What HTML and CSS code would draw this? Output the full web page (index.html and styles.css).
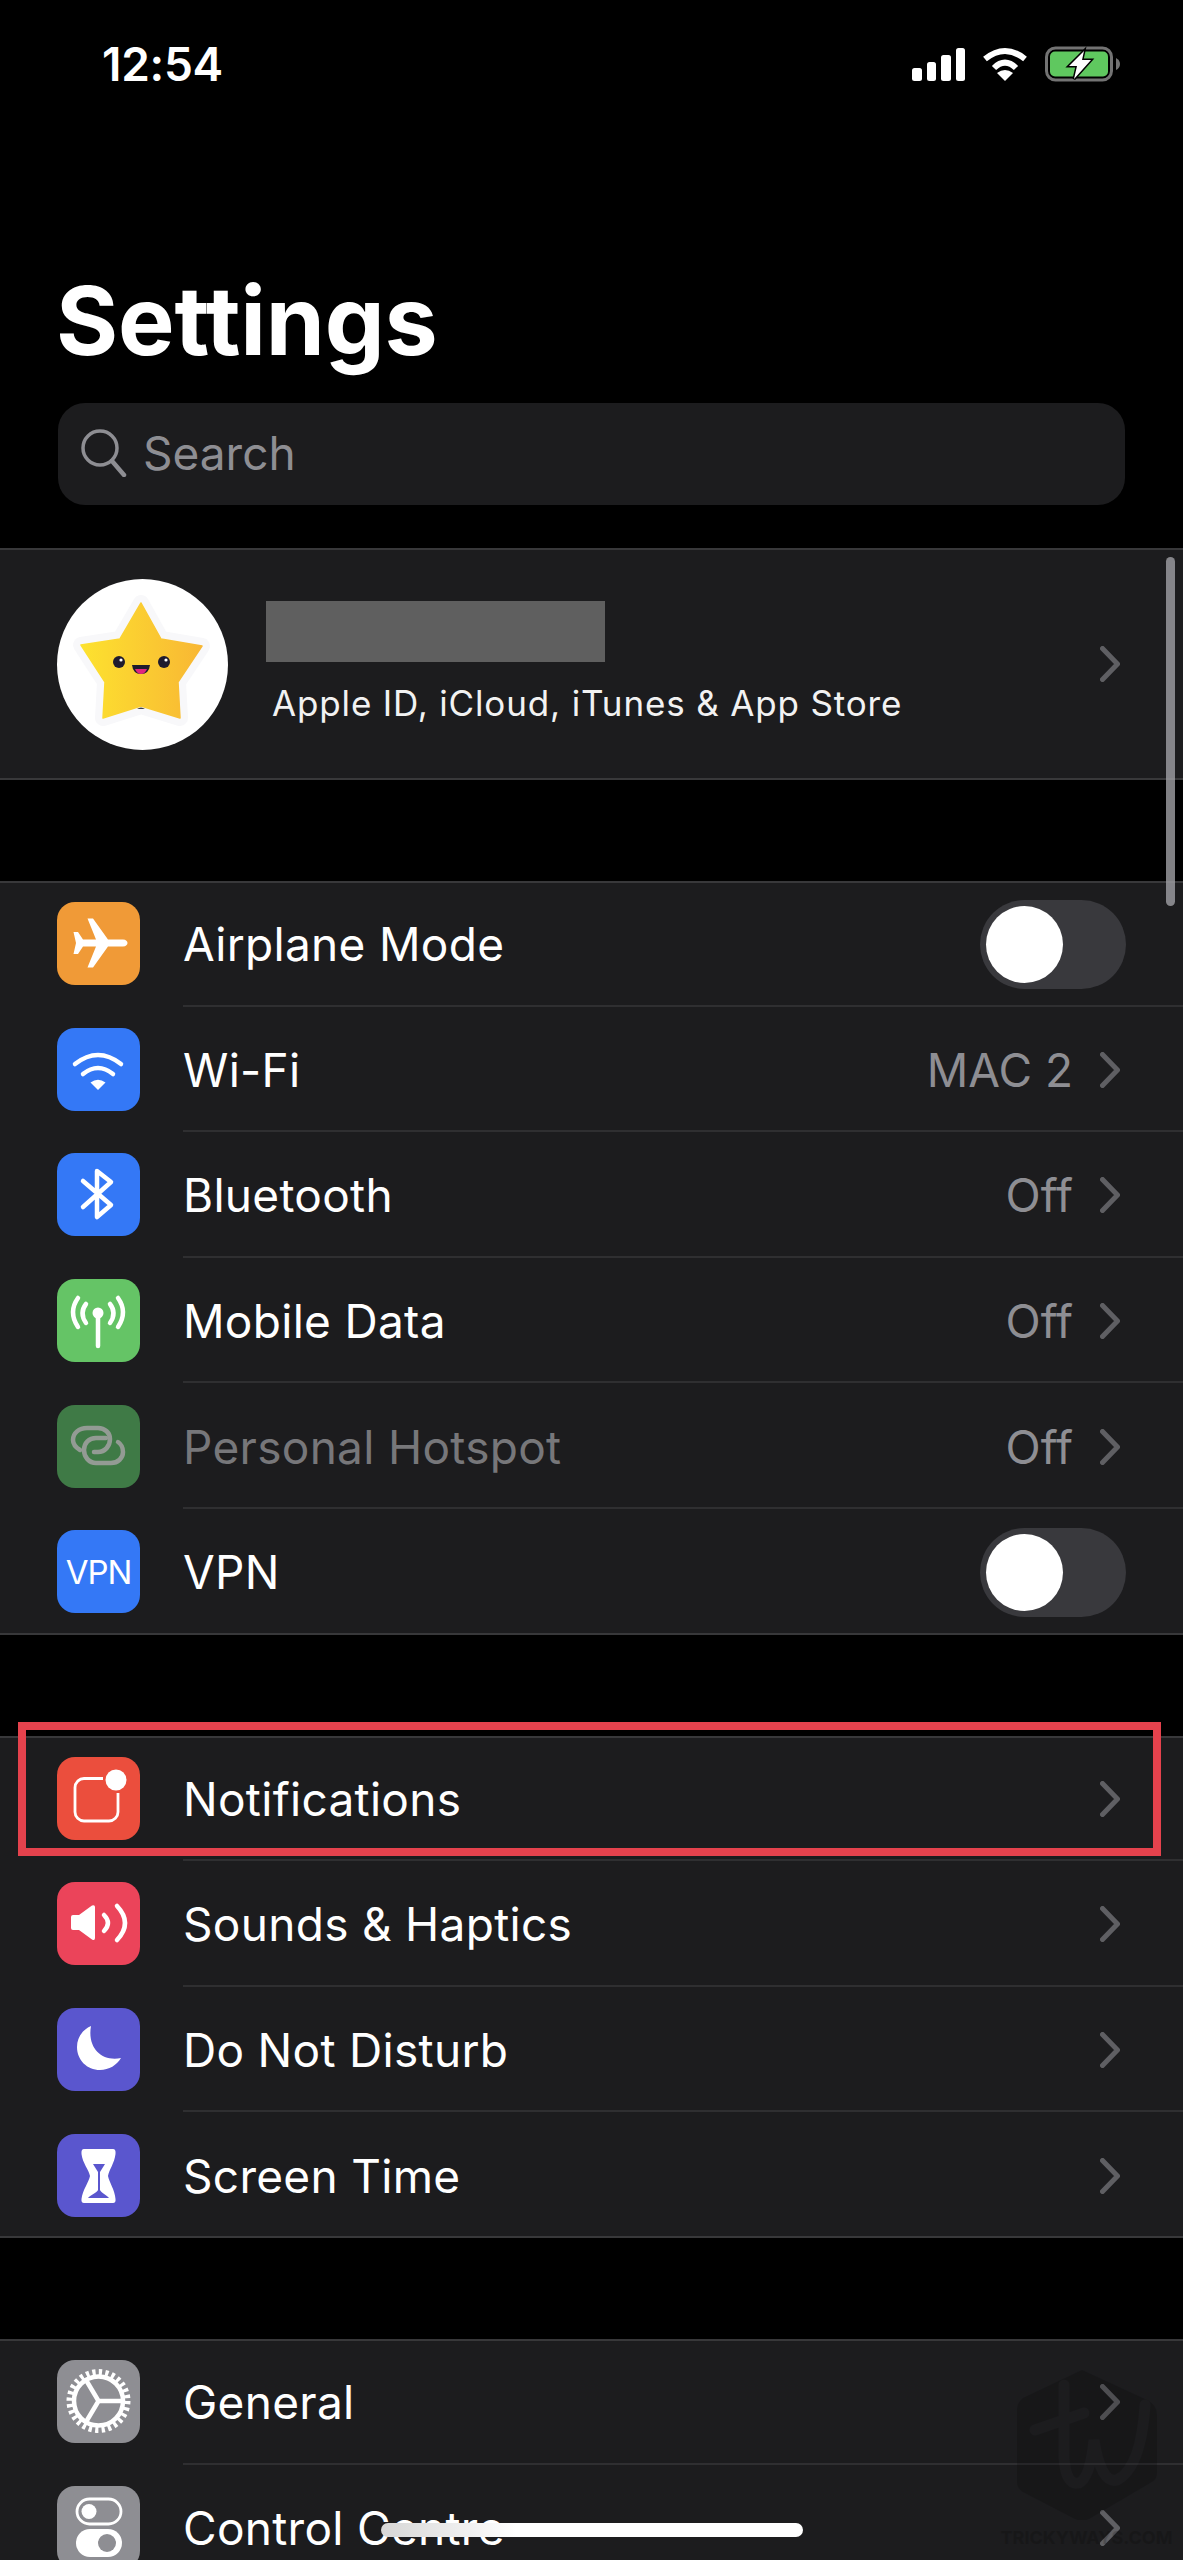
FILE: index.html
```html
<!DOCTYPE html>
<html lang="en">
<head>
    <meta charset="UTF-8">
    <meta name="viewport" content="width=device-width, initial-scale=1.0">
    <title>Settings</title>
    <link rel="stylesheet" href="styles.css">
</head>
<body>
    <div class="status-bar">
        <span class="status-time">12:54</span>
        <div class="status-icons">
            <div class="signal">
                <span class="bar bar-1"></span>
                <span class="bar bar-2"></span>
                <span class="bar bar-3"></span>
                <span class="bar bar-4"></span>
            </div>
            <svg class="status-wifi" width="46" height="34" viewBox="0 0 46 34">
                <path d="M3 12 Q23 -4 43 12" fill="none" stroke="#fff" stroke-width="6"/>
                <path d="M12 21 Q23 10 34 21" fill="none" stroke="#fff" stroke-width="6"/>
                <path d="M23 34 L15 26 Q23 20 31 26Z" fill="#fff"/>
            </svg>
            <svg class="status-battery" width="76" height="36" viewBox="0 0 76 36">
                <rect x="1.5" y="2" width="65" height="32" rx="9" fill="none" stroke="#737373" stroke-width="3"/>
                <rect x="5" y="5.5" width="58" height="25" rx="5" fill="#5fc85f"/>
                <path d="M71 12 Q75 14 75 18 Q75 22 71 24Z" fill="#737373"/>
                <path d="M39 5 L24 20 H32 L29 33 L46 14 H37Z" fill="#fff" stroke="#000" stroke-width="3" paint-order="stroke"/>
            </svg>
        </div>
    </div>

    <h1 class="page-title">Settings</h1>

    <div class="search-box">
        <svg width="46" height="48" viewBox="0 0 46 48">
            <circle cx="19" cy="19" r="17" fill="none" stroke="#8e8e93" stroke-width="3.5"/>
            <path d="M31 32 L43 46" stroke="#8e8e93" stroke-width="4.5" stroke-linecap="round"/>
        </svg>
        <span class="search-text">Search</span>
    </div>

    <div class="group profile">
        <div class="avatar">
            <svg width="171" height="171" viewBox="0 0 171 171">
                <defs>
                    <linearGradient id="starFill" x1="0" y1="0" x2="1" y2="0">
                        <stop offset="0" stop-color="#fde22f"/>
                        <stop offset="1" stop-color="#f8b734"/>
                    </linearGradient>
                </defs>
                <path class="star-edge" d="M84 24 L104 60 L145 67 L121 103 L123 139 L84 127 L46 139 L48 103 L24 66 L63 60Z"/>
                <path class="star-body" d="M84 24 L104 60 L145 67 L121 103 L123 139 L84 127 L46 139 L48 103 L24 66 L63 60Z"/>
                <circle cx="62" cy="83" r="6" fill="#1e1b2e"/>
                <circle cx="107" cy="83" r="6" fill="#1e1b2e"/>
                <circle cx="64" cy="81" r="1.6" fill="#fff"/>
                <circle cx="109" cy="81" r="1.6" fill="#fff"/>
                <path d="M75 86 H93 Q92 95 84 95 Q76 95 75 86Z" fill="#1e1b2e"/>
                <path d="M78 90 H90 Q88 95 84 95 Q80 95 78 90Z" fill="#e0267f"/>
                <path d="M80 130 Q84 127 88 130Z" fill="#444"/>
            </svg>
        </div>
        <div class="profile-text">
            <div class="profile-name"></div>
            <div class="profile-sub">Apple ID, iCloud, iTunes &amp; App Store</div>
        </div>
        <svg class="chevron" width="20" height="36" viewBox="0 0 20 36"><path d="M2.5 2.5 L17.5 18 L2.5 33.5"/></svg>
    </div>

    <div class="group">
        <div class="row">
            <div class="icon icon-orange">
                <svg viewBox="0 0 83 83"><path fill="#fff" d="M66 37.5 H51 L36 16.5 H30.5 L39 37.5 H26 L21 30 H16.5 L19 41 L16.5 52 H21 L26 44.5 H39 L30.5 65.5 H36 L51 44.5 H66 C69 44.5 70.5 42.5 70.5 41 C70.5 39.5 69 37.5 66 37.5Z"/></svg>
            </div>
            <div class="row-body">
                <span class="row-label">Airplane Mode</span>
                <div class="toggle"><span class="knob"></span></div>
            </div>
        </div>
        <div class="row">
            <div class="icon icon-blue">
                <svg viewBox="0 0 83 83">
                    <path class="line" d="M18 36 Q41 18 64 36"/>
                    <path class="line" d="M26 46 Q41 34 56 46"/>
                    <path fill="#fff" d="M41 62 L33.5 54.5 Q41 49 48.5 54.5Z"/>
                </svg>
            </div>
            <div class="row-body">
                <span class="row-label">Wi-Fi</span>
                <span class="row-value">MAC 2</span>
                <svg class="chevron" width="20" height="36" viewBox="0 0 20 36"><path d="M2.5 2.5 L17.5 18 L2.5 33.5"/></svg>
            </div>
        </div>
        <div class="row">
            <div class="icon icon-blue">
                <svg viewBox="0 0 83 83"><path class="line" d="M26 28 L54 52 L40 64 V18 L54 29 L26 54"/></svg>
            </div>
            <div class="row-body">
                <span class="row-label">Bluetooth</span>
                <span class="row-value">Off</span>
                <svg class="chevron" width="20" height="36" viewBox="0 0 20 36"><path d="M2.5 2.5 L17.5 18 L2.5 33.5"/></svg>
            </div>
        </div>
        <div class="row">
            <div class="icon icon-green">
                <svg viewBox="0 0 83 83">
                    <path class="line" d="M21 19 Q11 33 21 48"/>
                    <path class="line" d="M29 25 Q22 34 29 44"/>
                    <path class="line" d="M61 19 Q71 33 61 48"/>
                    <path class="line" d="M53 25 Q60 34 53 44"/>
                    <path class="line" d="M41 34 V67"/>
                    <circle cx="41" cy="34" r="5.5" fill="#fff"/>
                </svg>
            </div>
            <div class="row-body">
                <span class="row-label">Mobile Data</span>
                <span class="row-value">Off</span>
                <svg class="chevron" width="20" height="36" viewBox="0 0 20 36"><path d="M2.5 2.5 L17.5 18 L2.5 33.5"/></svg>
            </div>
        </div>
        <div class="row">
            <div class="icon icon-green-dim">
                <svg viewBox="0 0 83 83">
                    <path class="line-dim" d="M23 45 C18 42 16 39 16 35 C16 28 22 23 30 23 H41 C48 23 53 28 53 34 C53 41 48 47 41 47 H37"/>
                    <path class="line-dim" d="M49 33 H39 C32 33 27 38 27 45 C27 52 32 58 39 58 H54 C61 58 66 53 66 47 C66 42 64 39 61 37"/>
                </svg>
            </div>
            <div class="row-body">
                <span class="row-label row-label-dim">Personal Hotspot</span>
                <span class="row-value">Off</span>
                <svg class="chevron" width="20" height="36" viewBox="0 0 20 36"><path d="M2.5 2.5 L17.5 18 L2.5 33.5"/></svg>
            </div>
        </div>
        <div class="row">
            <div class="icon icon-blue icon-vpn">VPN</div>
            <div class="row-body">
                <span class="row-label">VPN</span>
                <div class="toggle"><span class="knob"></span></div>
            </div>
        </div>
    </div>

    <div class="group">
        <div class="row">
            <div class="icon icon-red">
                <svg viewBox="0 0 83 83">
                    <path d="M46 21.5 H27 A9 9 0 0 0 18 30.5 V55 A9 9 0 0 0 27 64 H52 A9 9 0 0 0 61 55 V36" fill="none" stroke="#fff" stroke-width="2.8"/>
                    <circle cx="59" cy="23" r="10.5" fill="#fff"/>
                </svg>
            </div>
            <div class="row-body">
                <span class="row-label">Notifications</span>
                <svg class="chevron" width="20" height="36" viewBox="0 0 20 36"><path d="M2.5 2.5 L17.5 18 L2.5 33.5"/></svg>
            </div>
        </div>
        <div class="row">
            <div class="icon icon-pink">
                <svg viewBox="0 0 83 83">
                    <path fill="#fff" d="M14 35 Q14 33 16 33 H22 L35 23.5 Q38 22.5 38 25 V56 Q38 59 35 57.5 L22 48 H16 Q14 48 14 46Z"/>
                    <path class="line" d="M47 33 Q55 41 47 49" stroke-width="3.5"/>
                    <path class="line" d="M60 24 Q76 41 60 58" stroke-width="3.5"/>
                </svg>
            </div>
            <div class="row-body">
                <span class="row-label">Sounds &amp; Haptics</span>
                <svg class="chevron" width="20" height="36" viewBox="0 0 20 36"><path d="M2.5 2.5 L17.5 18 L2.5 33.5"/></svg>
            </div>
        </div>
        <div class="row">
            <div class="icon icon-indigo">
                <svg viewBox="0 0 83 83"><path fill="#fff" d="M34 18 C25 22 20 30 20 39 C20 52 30 62 43 62 C52 62 60 57 64 50 C45 54 30 40 34 18Z"/></svg>
            </div>
            <div class="row-body">
                <span class="row-label">Do Not Disturb</span>
                <svg class="chevron" width="20" height="36" viewBox="0 0 20 36"><path d="M2.5 2.5 L17.5 18 L2.5 33.5"/></svg>
            </div>
        </div>
        <div class="row">
            <div class="icon icon-indigo">
                <svg viewBox="0 0 83 83">
                    <path fill="#fff" d="M27 15 H56 Q59 15 58.5 20 C57.5 29 52 36 51 42 C52 48 58 56 58.5 65 Q59 69 56 69 H27 Q24 69 24.5 65 C25.5 56 32 48 33 42 C32 36 25.5 29 24.5 20 Q24 15 27 15Z"/>
                    <path fill="#5a56ce" d="M36 30 H48 L43 38 V56 C44 59 50 61 52 64 H31 C33 61 40 59 41 56 V38Z"/>
                </svg>
            </div>
            <div class="row-body">
                <span class="row-label">Screen Time</span>
                <svg class="chevron" width="20" height="36" viewBox="0 0 20 36"><path d="M2.5 2.5 L17.5 18 L2.5 33.5"/></svg>
            </div>
        </div>
    </div>

    <div class="group">
        <div class="row">
            <div class="icon icon-gray">
                <svg viewBox="0 0 83 83">
                    <circle cx="41.5" cy="41" r="28.5" fill="none" stroke="#fff" stroke-width="7" stroke-dasharray="3.2 3.2"/>
                    <circle cx="41.5" cy="41" r="24.5" fill="none" stroke="#fff" stroke-width="4.5"/>
                    <path class="line" d="M41.5 41 H66 M41.5 41 L29 20 M41.5 41 L29 62"/>
                </svg>
            </div>
            <div class="row-body">
                <span class="row-label">General</span>
                <svg class="chevron" width="20" height="36" viewBox="0 0 20 36"><path d="M2.5 2.5 L17.5 18 L2.5 33.5"/></svg>
            </div>
        </div>
        <div class="row">
            <div class="icon icon-gray">
                <svg viewBox="0 0 83 83">
                    <rect x="20" y="13" width="44" height="25" rx="12.5" fill="none" stroke="#fff" stroke-width="2.8"/>
                    <circle cx="32" cy="25.5" r="7.5" fill="#fff"/>
                    <rect x="19" y="43" width="46" height="28" rx="14" fill="#fff"/>
                    <circle cx="50" cy="57" r="9" fill="#8e8e93"/>
                </svg>
            </div>
            <div class="row-body">
                <span class="row-label">Control Centre</span>
                <svg class="chevron" width="20" height="36" viewBox="0 0 20 36"><path d="M2.5 2.5 L17.5 18 L2.5 33.5"/></svg>
            </div>
        </div>
    </div>

    <!-- things lying over the list -->
    <div class="scroll-thumb"></div>
    <div class="highlight-box"></div>
    <div class="watermark">
        <svg width="140" height="150" viewBox="0 0 140 150">
            <path fill="#000" d="M65 0 L130 30 Q140 35 140 45 V103 Q140 110 133 113 L72 149 Q65 152 58 149 L6 122 Q0 118 0 112 V40 Q0 33 6 28Z"/>
            <path class="watermark-mark" d="M18 60 L67 43 M47 15 V88 Q49 116 62 113 Q73 108 77 70 Q84 114 100 110 Q124 98 128 35"/>
        </svg>
        <span class="watermark-text">TRICKYWAYS.COM</span>
    </div>
    <div class="home-indicator"></div>
</body>
</html>
```

FILE: styles.css
```css
/* Base */
:root {
    --row-height: 125.6px;
    --surface: #1c1c1e;
    --hairline: #38383a;
    --separator: #2f2f31;
    --text-muted: #8e8e93;
}

* {
    margin: 0;
    padding: 0;
    box-sizing: border-box;
}

html,
body {
    width: 1183px;
    height: 2560px;
    overflow: hidden;
}

body {
    position: relative;
    background-color: #000;
    color: #fff;
    font-family: 'Inter', sans-serif;
}

/* Status bar */
.status-bar {
    height: 276px;
    padding: 46px 62px 0 102px;
    display: flex;
    justify-content: space-between;
    align-items: flex-start;
}

.status-time {
    font-size: 46px;
    font-weight: 600;
    line-height: 36px;
    letter-spacing: -0.3px;
}

.status-icons {
    display: flex;
    align-items: flex-start;
    gap: 17px;
}

.signal {
    display: flex;
    align-items: flex-end;
    gap: 5px;
    height: 34px;
    margin-top: 1px;
}

.bar {
    width: 9.5px;
    background: #fff;
    border-radius: 2.5px;
}

.bar-1 { height: 13px; }
.bar-2 { height: 19px; }
.bar-3 { height: 26px; }
.bar-4 { height: 33px; }

.status-wifi {
    margin-top: 1px;
}

/* Title + search */
.page-title {
    font-size: 95px;
    font-weight: 700;
    line-height: 89px;
    padding-left: 56px;
    margin-bottom: 38px;
    letter-spacing: -0.2px;
}

.search-box {
    height: 102px;
    margin: 0 58px;
    padding: 0 0 2px 23px;
    display: flex;
    align-items: center;
    gap: 16px;
    background: var(--surface);
    border-radius: 27px;
}

.search-text {
    font-size: 46px;
    color: var(--text-muted);
}

/* Groups */
.group {
    margin-top: 101px;
    background: var(--surface);
    box-shadow: inset 0 2px 0 var(--hairline), inset 0 -2px 0 var(--hairline);
}

.profile {
    margin-top: 43px;
    height: 232px;
    padding: 0 63px 0 57px;
    display: flex;
    align-items: center;
}

.avatar {
    width: 171px;
    height: 171px;
    border-radius: 50%;
    background: #fff;
    flex-shrink: 0;
}

.star-edge {
    fill: none;
    stroke: #f8f8fa;
    stroke-width: 16;
    stroke-linejoin: round;
}

.star-body {
    fill: url(#starFill);
    stroke: url(#starFill);
    stroke-width: 1.5;
    stroke-linejoin: round;
}

.profile-text {
    flex: 1;
    padding: 0 0 2px 38px;
}

.profile-name {
    width: 339px;
    height: 61px;
    background: #5f5f5f;
    margin-bottom: 19px;
}

.profile-sub {
    font-size: 35px;
    line-height: 44px;
    padding-left: 6px;
    letter-spacing: 0.85px;
    color: #f2f2f2;
}

.row {
    height: var(--row-height);
    padding-left: 57px;
    display: flex;
    align-items: center;
    gap: 43px;
}

.row-body {
    flex: 1;
    height: 100%;
    padding: 3px 63px 0 0;
    display: flex;
    align-items: center;
    border-bottom: 2px solid var(--separator);
}

.row:last-child .row-body {
    border-bottom-color: transparent;
}

.row-label {
    flex: 1;
    font-size: 46px;
    letter-spacing: 0.3px;
}

.row-label-dim {
    color: #77777a;
}

.row-value {
    font-size: 46px;
    color: var(--text-muted);
    margin-right: 27px;
}

.chevron {
    flex-shrink: 0;
}

.chevron path {
    fill: none;
    stroke: #5f5f63;
    stroke-width: 5;
    stroke-linecap: round;
    stroke-linejoin: round;
}

/* Icons */
.icon {
    width: 83px;
    height: 83px;
    flex-shrink: 0;
    border-radius: 18px;
    display: flex;
    align-items: center;
    justify-content: center;
}

.icon svg {
    width: 83px;
    height: 83px;
}

.icon .line {
    fill: none;
    stroke: #fff;
    stroke-width: 4.5;
    stroke-linecap: round;
    stroke-linejoin: round;
}

.icon .line-dim {
    fill: none;
    stroke: #939b94;
    stroke-width: 4.5;
    stroke-linecap: round;
}

.icon-orange { background: #f09a37; }
.icon-blue { background: #3478f6; }
.icon-green { background: #65c466; }
.icon-green-dim { background: #3f7a46; }
.icon-red { background: #eb4e3d; }
.icon-pink { background: #eb445a; }
.icon-indigo { background: #5a56ce; }
.icon-gray { background: #8e8e93; }

.icon-vpn {
    font-size: 33px;
    letter-spacing: -1px;
}

/* Toggle */
.toggle {
    width: 146px;
    height: 89px;
    margin-right: -6px;
    padding: 6px;
    border-radius: 45px;
    background: #39393d;
}

.knob {
    display: block;
    width: 77px;
    height: 77px;
    border-radius: 50%;
    background: #fff;
}

/* Overlays */
.scroll-thumb {
    position: absolute;
    left: 1166px;
    top: 557px;
    width: 9px;
    height: 349px;
    border-radius: 5px;
    background: rgba(160, 160, 165, 0.8);
}

.highlight-box {
    position: absolute;
    left: 18px;
    top: 1722px;
    width: 1143px;
    height: 134px;
    border: 8px solid #e5424d;
}

.watermark {
    position: absolute;
    left: 1008px;
    top: 2370px;
    width: 157px;
    display: flex;
    flex-direction: column;
    align-items: center;
    gap: 9px;
    opacity: 0.17;
}

.watermark-mark {
    fill: none;
    stroke: #1c1c1e;
    stroke-width: 11;
    stroke-linecap: round;
}

.watermark-text {
    font-size: 18px;
    line-height: 18px;
    font-weight: 700;
    white-space: nowrap;
    color: #000;
}

.home-indicator {
    position: absolute;
    left: 381px;
    top: 2523px;
    width: 422px;
    height: 14px;
    border-radius: 7px;
    background: linear-gradient(to right, #d6d6d6, #fff 32%);
}
```
